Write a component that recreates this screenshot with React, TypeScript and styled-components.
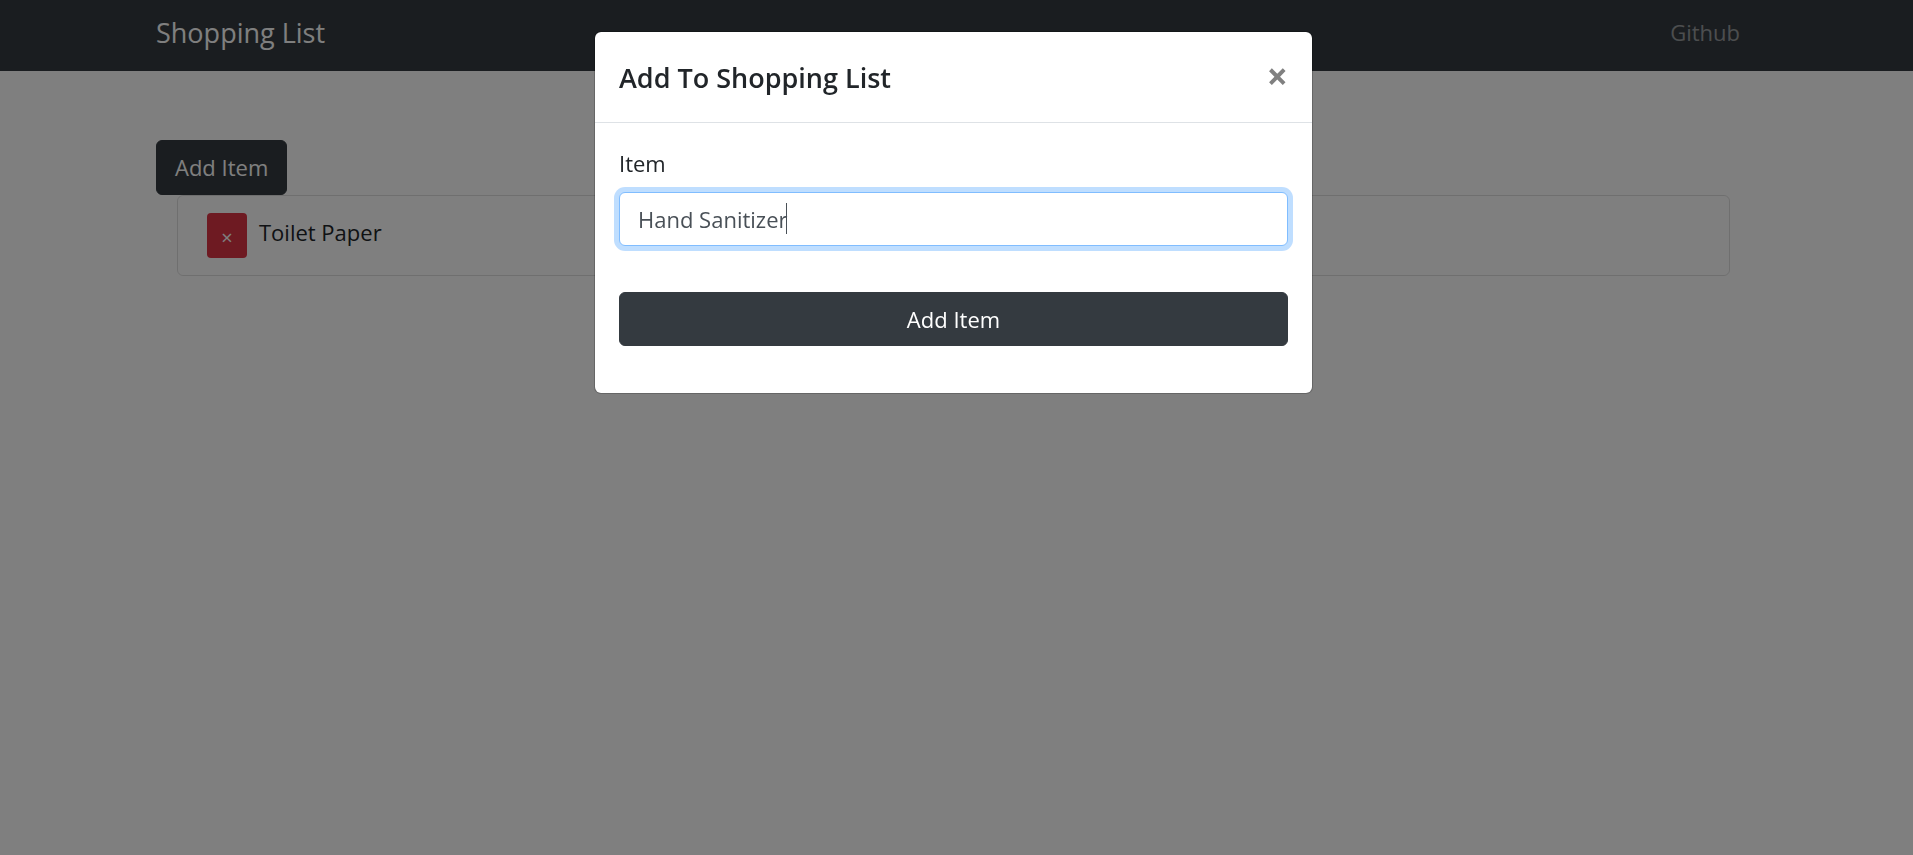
import React, { useState } from "react";
import styled, { createGlobalStyle } from "styled-components";

const GlobalStyle = createGlobalStyle`
  *, *::before, *::after { box-sizing: border-box; }
  body {
    margin: 0;
    background: #fff;
    color: #212529;
    font-family: "Segoe UI", "Open Sans", sans-serif;
    font-size: 22px;
    line-height: 34px;
  }
  button, input { font: inherit; }
`;

const Navbar = styled.header`
  padding: 11px 6px 11px 0;
  background: #343a40;
`;

const Container = styled.div`
  width: 100%;
  max-width: 1639px;
  margin: 0 auto;
  padding: 0 22px;
`;

const NavRow = styled(Container)`
  display: flex;
  align-items: center;
  justify-content: space-between;
  height: 49px;
`;

const Brand = styled.a`
  padding-bottom: 6px;
  color: #fff;
  font-size: 27px;
  text-decoration: none;
`;

const NavLink = styled.a`
  padding: 0 11px 8px;
  color: rgba(255, 255, 255, 0.5);
  text-decoration: none;
`;

const Main = styled.main`
  padding: 69px 6px 0 0;
`;

const Button = styled.button<{ $block?: boolean }>`
  display: block;
  width: ${(p) => (p.$block ? "100%" : "auto")};
  height: ${(p) => (p.$block ? "54px" : "55px")};
  padding: ${(p) => (p.$block ? "0 18px" : "0 18px 2px")};
  border: 1px solid #343a40;
  border-radius: 6px;
  background: #343a40;
  color: #fff;
  cursor: pointer;
`;

const List = styled.ul`
  margin: 0;
  padding: 0 21px;
  list-style: none;
`;

const ListItem = styled.li`
  display: flex;
  align-items: center;
  gap: 12px;
  height: 81px;
  padding: 0 29px;
  border: 1px solid rgba(0, 0, 0, 0.125);
  border-radius: 6px;
`;

const ItemName = styled.span`
  padding-bottom: 8px;
`;

const RemoveButton = styled.button`
  width: 40px;
  height: 45px;
  padding: 4px 0 0;
  border: 0;
  border-radius: 4px;
  background: #dc3545;
  color: #fff;
  font-size: 20px;
  line-height: 30px;
  cursor: pointer;
`;

const Backdrop = styled.div`
  position: fixed;
  inset: 0;
  padding: 31px 6px 31px 0;
  background: rgba(0, 0, 0, 0.5);
`;

const Dialog = styled.section`
  max-width: 719px;
  margin: 0 auto;
  border: 1px solid rgba(0, 0, 0, 0.2);
  border-radius: 7px;
  background: #fff;
  background-clip: padding-box;
`;

const DialogHeader = styled.header`
  display: flex;
  align-items: center;
  justify-content: space-between;
  height: 91px;
  padding: 2px 24px 0;
  border-bottom: 1px solid #dee2e6;
`;

const DialogTitle = styled.h5`
  margin: 0;
  font-size: 27px;
  font-weight: 600;
`;

const CloseButton = styled.button`
  padding: 0 0 4px;
  border: 0;
  background: transparent;
  color: #808080;
  font-size: 37px;
  font-weight: 700;
  cursor: pointer;
`;

const DialogBody = styled.form`
  padding: 23px 24px 47px;
`;

const Label = styled.label`
  display: block;
  margin-bottom: 12px;
`;

const Field = styled.div`
  position: relative;
  margin-bottom: 46px;
`;

const TextInput = styled.input`
  display: block;
  width: 100%;
  height: 54px;
  padding: 0 18px 1px;
  border: 1px solid #80bdff;
  border-radius: 6px;
  outline: 0;
  background: #fff;
  box-shadow: 0 0 0 5px rgba(0, 123, 255, 0.25);
  color: #495057;
  caret-color: transparent;
`;

const Caret = styled.span`
  position: absolute;
  top: 11px;
  left: 167px;
  width: 1px;
  height: 31px;
  background: #495057;
`;

export default function App() {
  const [item, setItem] = useState("Hand Sanitizer");

  return (
    <>
      <GlobalStyle />
      <Navbar>
        <NavRow>
          <Brand href="#">Shopping List</Brand>
          <NavLink href="#">Github</NavLink>
        </NavRow>
      </Navbar>
      <Main>
        <Container>
          <Button type="button">Add Item</Button>
          <List>
            <ListItem>
              <RemoveButton type="button" aria-label="Remove Toilet Paper">×</RemoveButton>
              <ItemName>Toilet Paper</ItemName>
            </ListItem>
          </List>
        </Container>
      </Main>
      <Backdrop>
        <Dialog role="dialog" aria-modal="true" aria-labelledby="dialog-title">
          <DialogHeader>
            <DialogTitle id="dialog-title">Add To Shopping List</DialogTitle>
            <CloseButton type="button" aria-label="Close">×</CloseButton>
          </DialogHeader>
          <DialogBody onSubmit={(e) => e.preventDefault()}>
            <Label htmlFor="item">Item</Label>
            <Field>
              <TextInput
                id="item"
                type="text"
                value={item}
                onChange={(e) => setItem(e.target.value)}
              />
              <Caret aria-hidden="true" />
            </Field>
            <Button type="submit" $block>Add Item</Button>
          </DialogBody>
        </Dialog>
      </Backdrop>
    </>
  );
}
